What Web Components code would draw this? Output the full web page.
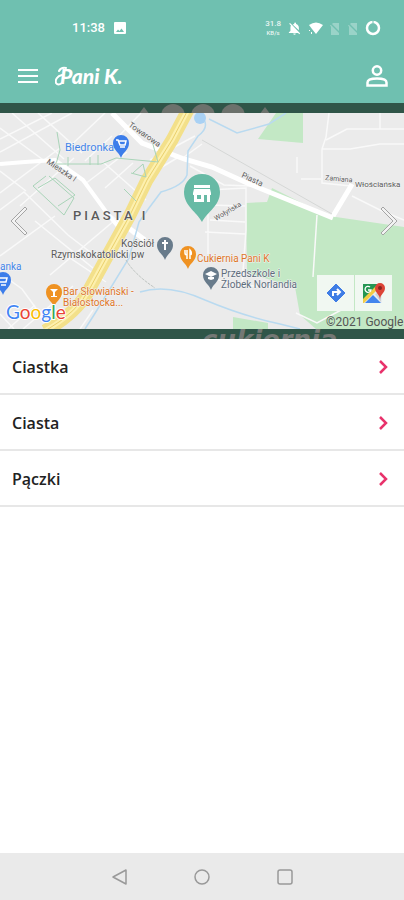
<!DOCTYPE html>
<html lang="pl">
<head>
<meta charset="utf-8">
<meta name="viewport" content="width=device-width, initial-scale=1">
<title>Pani K.</title>
<style>
html,body{margin:0;height:100%}
body{background:#fff;font-family:"Open Sans","Noto Sans",sans-serif;color:#222}
</style>
</head>
<body>
<shop-app></shop-app>

<template id="status-bar">
<style>
:host{display:flex;align-items:center;height:24px;padding:0 23px 0 72px;color:#fff;font:500 13px/24px Roboto,sans-serif}
.left,.right{display:flex;align-items:center;gap:9px}
.right{margin-left:auto;gap:6px}
.rate{display:flex;flex-direction:column;align-items:center;font:500 8px/10px Roboto,sans-serif;opacity:.85}
.rate small{font-size:6px;line-height:8px}
svg{display:block;fill:currentColor}
.dim{opacity:.3}
</style>
<div class="left"><span>11:38</span>
<svg width="12" height="12" viewBox="0 0 12 12"><path fill-rule="evenodd" d="M1 0h10q1 0 1 1v10q0 1-1 1H1q-1 0-1-1V1q0-1 1-1zM2 10h8L7.500 6.500 5.500 9 4 7.500z"/></svg></div>
<div class="right">
<span class="rate"><span>31.8</span><small>KB/s</small></span>
<svg width="15" height="15" viewBox="0 0 24 24"><path d="M20 18.700 7.800 6.100 4.800 3 3.500 4.300l2.800 2.800A7 7 0 0 0 5.500 11v5L3 18v1h14.700l2 2 1.300-1.300zM12 22a2 2 0 0 0 2-2h-4a2 2 0 0 0 2 2zm7-7.300V11c0-3.100-1.600-5.600-4.500-6.300V4a1.500 1.500 0 0 0-3 0v.7q-1.400.3-2.500 1z"/></svg>
<svg width="15" height="15" viewBox="0 0 15 15"><path d="M1 4q7-5 14 0L8 13 4 8zM1 9h1v1H1zm2 2h1v2H3z"/></svg>
<svg class="dim" width="12" height="13" viewBox="0 0 12 13"><path d="M1 3h1l8 8v2H2V5zM4 1h6v8L3 2z"/></svg>
<svg class="dim" width="12" height="13" viewBox="0 0 12 13"><path d="M1 3h1l8 8v2H2V5zM4 1h6v8L3 2z"/></svg>
<svg width="16" height="16" viewBox="0 0 16 16"><circle cx="8" cy="8" r="6" fill="none" stroke="currentColor" stroke-width="2.500"/><path d="M7.500 0h1v4h-1z" fill="#6fc0b0"/></svg>
</div>
</template>

<template id="app-header">
<style>
:host{display:block;background:#6fc0b0;padding-top:16px;color:#fff}
nav{display:flex;align-items:center;height:55px;padding:8px 13px 0 14px}
button{display:grid;place-items:center;width:28px;height:40px;padding:0;border:0;background:none;color:inherit}
a{position:relative;margin-left:18px;color:inherit;text-decoration:none;font:italic 900 21px/28px Lato,sans-serif}
.swash{position:absolute;left:-5px;top:3px;fill:none;stroke:currentColor;stroke-width:2;stroke-linecap:round}
.user{margin-left:auto}
svg{display:block;fill:currentColor}
.user svg{fill:none;stroke:currentColor;stroke-width:2.500}
</style>
<status-bar></status-bar>
<nav>
<button aria-label="Menu"><svg width="20" height="14" viewBox="0 0 20 14"><path d="M0 0h20v2H0zM0 6h20v2H0zM0 12h20v2H0z"/></svg></button>
<a href="#">Pani K.<svg class="swash" width="16" height="22" viewBox="0 0 16 22" aria-hidden="true"><path d="M7 10C2 11 0 15 1 18q2 3 6 0M4 6q2-4 7-3"/></svg></a>
<button class="user" aria-label="Konto"><svg width="22" height="22" viewBox="0 0 22 22"><circle cx="11" cy="5.500" r="4.200"/><path d="M1.500 20.500v-3q0-4 9.500-4t9.500 4v3z"/></svg></button>
</nav>
</template>

<template id="shop-map">
<style>
:host{display:block;position:relative;background:#2f5548;padding:10px 0;overflow:hidden}
.back{position:absolute;inset:0;width:100%;height:100%}
.map{display:block;position:relative;width:100%;height:216px;background:#ebebeb}
.arrow{position:absolute;top:50%;transform:translateY(-50%);width:20px;height:36px;padding:0;border:0;background:none}
.prev{left:9px}.next{right:5px}
.arrow svg{display:block;fill:#f2f2f2;stroke:#a4a4a4;stroke-width:1}
.tools{position:absolute;right:12px;bottom:28px;display:flex;gap:1px}
.tools a{display:grid;place-items:center;width:37px;height:36px;background:#f1f8f2}
.road{fill:none;stroke:#fff}
.minor{stroke:#f9f9f9}
text{font-family:Roboto,sans-serif}
.back text{font-family:"DejaVu Sans",sans-serif}
.google{font-family:Lato,sans-serif}
</style>
<svg class="back" viewBox="0 0 404 236" preserveAspectRatio="xMidYMid slice" aria-hidden="true">
<g fill="#6c716c"><circle cx="173" cy="13" r="12"/><circle cx="203" cy="13" r="12"/><circle cx="233" cy="13" r="12"/><path d="M138 12l6-8 6 8zM259 12l6-8 6 8z"/></g>
<text x="202" y="246" font-size="26" font-weight="700" font-style="italic" fill="#747875">cukiernia</text>
</svg>
<svg class="map" viewBox="0 113 404 216" preserveAspectRatio="xMidYMid slice" role="img" aria-label="Mapa okolicy cukierni">
<rect y="113" width="404" height="216" fill="#ebebeb"/>
<g fill="#c3e8c5"><path d="M276 113h27v30l-45-4 18-26zM272 188l56 28 8 1 68 10v102h-88l-16-14-5-28-48-14-1-70 21-1zM233 317l35 6v6h-35z"/></g>
<g class="road minor" stroke-width="1.500">
<path d="M0 139l52-26M0 152l72-39M12 113l52 46M38 113l44 40M0 128l46 34M0 193l60-45M20 206l54-48M0 171l26 20M66 150l39-37M85 161l27-25M105 188l28-25M103 162l43 38M85 184l42-32M0 210l24-18 44 43 26 20M0 256l55-40M35 221l58 47M50 275l65-55M0 273l22 16 29 40M23 329l50-43M8 329l27-24M61 252l45 30M105 210l29 25M141 113l-23 24M150 160l45-24M157 170l20-12"/>
<path d="M202 144l-18 13M190 166l34 19 26 1M208 190l38-2v42l-4 55M208 205l37 1M210 220l35 2M205 232l40 2M208 192v62M204 275l30 10 42 2M329 113l-3 24-4 12v34l29 3M322 149h28l30-5h24M326 140l21-11h57M380 113v16M297 157v16M301 179h20M352 196l28 14 24 10M317 215l-4 62M296 313l21 10 26-14M0 314l14 15M80 329l13-19"/>
</g>
<g class="road"><path d="M0 164l25-2 30-2 28 20 24 33 18 22" stroke-width="4"/><path d="M112 113l30 30 42 16 28 8 35 16 86 35" stroke-width="5"/><path d="M333 216l18-30 1-2" stroke-width="5"/><path d="M118 220l27 20" stroke-width="5"/></g>
<g fill="none">
<path d="M190 106L172 140 147 180 130 215 109 253 90 288Q78 312 45 331" stroke="#f3e08a" stroke-width="13"/>
<path d="M190 106L172 140 147 180 130 215 109 253 90 288Q78 312 45 331" stroke="#fdf0ae" stroke-width="5"/>
<path d="M190 106L172 140 147 180 130 215 109 253 90 288Q78 312 45 331" stroke="#e9cf6c" stroke-width="1"/>
</g>
<g fill="none" stroke="#b9daf0" stroke-width="1.500"><path d="M198 113q15 12 0 23l-10 15-1 24q-4 11-26 17l-12 16-10 14-10 36-35 57-9 14M209 119l28 14 32-9 17-11M140 292q28-9 65 8 38 16 75 24l20 5"/></g>
<circle cx="200" cy="118" r="6" fill="#a9d1f4"/>
<g fill="none" stroke="#a9d4b8" stroke-width="1"><path d="M57 132l3 18-4 14h45l15-6 42 4-6-21M46 176l-13 10 31 29 10-17-25-22M38 188l17-10 20 17-17 11M68 157v9M90 157v8M98 155v10M133 173l10-9 3 13-15-4M124 189l12 12"/></g>
<path d="M202 140l130 74" fill="none" stroke="#d5d7d6" stroke-width="1"/>
<path d="M126 260q8 14 29 28" fill="none" stroke="#bcc2bf" stroke-width="1" stroke-dasharray="3 1"/>
<g font-size="10" fill="#5a5a5a" stroke="#f4f4f4" stroke-width="1" paint-order="stroke" stroke-linejoin="round">
<text transform="translate(128 126) rotate(35)" font-size="8">Towarowa</text>
<text transform="translate(46 163) rotate(34)" font-size="8">Mieszka I</text>
<text transform="translate(241 177) rotate(25)" font-size="8">Piasta</text>
<text transform="translate(216 221) rotate(-31)" font-size="7">Wołyńska</text>
<text transform="translate(325 180) rotate(5)" font-size="7">Zamiana</text>
<text x="355" y="187" font-size="8">Włościańska</text>
<text x="73" y="220" font-size="13" font-weight="500" letter-spacing="3">PIASTA I</text>
<text x="121" y="247">Kościół</text><text x="51" y="258">Rzymskokatolicki pw</text>
<g fill="#5e6d7c"><text x="221" y="277">Przedszkole i</text><text x="221" y="288">Żłobek Norlandia</text></g>
<g fill="#4384e8"><text x="65" y="151" font-size="11">Biedronka</text><text x="0" y="270">anka</text></g>
<g fill="#df7628"><text x="197" y="262">Cukiernia Pani K</text><text x="63" y="295">Bar Słowiański -</text><text x="63" y="306">Białostocka...</text></g>
</g>
<defs><path id="pin" d="M0 11C-2 5-8 3-8-4a8 8 0 0 1 16 0C8 3 2 5 0 11z"/></defs>
<use href="#pin" x="121" y="147" fill="#3c7dea"/><path d="M116 140h2l2 5h5l1-4h-7M120 147h5" fill="none" stroke="#fff" stroke-width="1.500"/>
<use href="#pin" x="3" y="284" fill="#3c7dea"/><path d="M-1 278h8l-1 4h-6M1 285h5" fill="none" stroke="#fff" stroke-width="1.500"/>
<use href="#pin" x="165" y="249" fill="#687b8b"/><path d="M165 240v10M162 243h6" stroke="#fff" stroke-width="2"/>
<use href="#pin" x="188" y="258" fill="#ef9222"/><path d="M185 250v3q0 2 2 2v4M187 250v5M190 259v-9q2 2 1 5" fill="none" stroke="#fff" stroke-width="1.500"/>
<use href="#pin" x="211" y="279" fill="#687b8b"/><path d="M205 274l6-3 6 3-6 3zM208 277v2l3 1 3-1v-2" fill="#fff"/>
<use href="#pin" x="54" y="296" fill="#ef9222"/><path d="M50 289h8l-4 4zM53 292h2v4h-2zM51 296h6v1h-6z" fill="#fff"/>
<path d="M202 222C197 212 184 206 184 192a18 18 0 0 1 36 0C220 206 207 212 202 222z" fill="#67baa5"/>
<path fill="#fff" fill-rule="evenodd" d="M194 185h16v3h-16zM194 189h16l1 4v2h-1v7h-3v-7h-3v7h-10v-7h-1v-2zM197 195v4h4v-4z"/>
<text class="google" x="6" y="319" font-size="19" stroke="#fff" stroke-width="2" paint-order="stroke"><tspan fill="#4285f4">G</tspan><tspan fill="#ea4335">o</tspan><tspan fill="#fbbc05">o</tspan><tspan fill="#4285f4">g</tspan><tspan fill="#34a853">l</tspan><tspan fill="#ea4335">e</tspan></text>
<text x="326" y="326" font-size="12" fill="#555">©2021 Google</text>
</svg>
<button class="arrow prev" aria-label="Poprzedni"><svg width="20" height="36" viewBox="0 0 20 36"><path d="M16 4L2 18l14 14 2-2L6 18 18 6z"/></svg></button>
<button class="arrow next" aria-label="Następny"><svg width="20" height="36" viewBox="0 0 20 36"><path d="M4 4l14 14L4 32l-2-2 12-12L2 6z"/></svg></button>
<div class="tools">
<a href="#trasa" aria-label="Wyznacz trasę"><svg width="20" height="20" viewBox="0 0 20 20"><path d="M10 1l9 9-9 9-9-9z" fill="#3f7de5" stroke="#3f7de5" stroke-linejoin="round"/><path d="M7 13v-4h6M11 6l3 3-3 3" fill="none" stroke="#fff" stroke-width="2"/></svg></a>
<a href="#mapa" aria-label="Otwórz w Mapach Google"><svg width="22" height="22" viewBox="0 0 22 22"><path d="M0 2h18v19H0z" fill="#259653"/><path d="M0 21L15 5l4 4v12z" fill="#e9edf0"/><path d="M2 21l8-8 8 8z" fill="#4385ed"/><path d="M0 17L14 3l2 3L1 21H0z" fill="#f3cc45"/><path d="M18 9v11l-6-8z" fill="#cfd3d5"/><path d="M7 5a3 3 0 1 0 1 3H5" fill="none" stroke="#fff" stroke-width="1.300"/><path d="M17 18c0-6-5-7-5-12a5 5 0 0 1 10 0c0 5-5 6-5 12z" fill="#dc4437"/><circle cx="17" cy="6" r="2" fill="#87251f"/></svg></a>
</div>
</template>

<template id="category-row">
<style>
:host{display:block;border-bottom:2px solid #e7e7e7}
a{display:flex;align-items:center;justify-content:space-between;padding:16px 15px 14px 12px;color:#222;text-decoration:none;font:600 16px/24px "Open Sans","Noto Sans",sans-serif}
svg{display:block;fill:none;stroke:#e8326b;stroke-width:2.500}
</style>
<a href="#"><span><slot></slot></span><svg width="12" height="16" viewBox="0 0 12 16" aria-hidden="true"><path d="M3 2l6 6-6 6"/></svg></a>
</template>

<template id="system-nav">
<style>
:host{display:flex;justify-content:center;align-items:center;gap:55px;height:47px;background:#eaeaea}
button{display:grid;place-items:center;width:28px;height:28px;padding:0;border:0;background:none}
svg{display:block;fill:none;stroke:#999;stroke-width:1.500;stroke-linejoin:round}
</style>
<button aria-label="Wstecz"><svg width="18" height="18" viewBox="0 0 18 18"><path d="M3 9l13-7v14z"/></svg></button>
<button aria-label="Ekran główny"><svg width="18" height="18" viewBox="0 0 18 18"><circle cx="9" cy="9" r="7"/></svg></button>
<button aria-label="Ostatnie"><svg width="18" height="18" viewBox="0 0 18 18"><rect x="2" y="2" width="14" height="14" rx="2"/></svg></button>
</template>

<template id="shop-app">
<style>
:host{display:flex;flex-direction:column;min-height:100vh}
main{flex:1}
</style>
<app-header></app-header>
<main>
<shop-map></shop-map>
<category-row>Ciastka</category-row>
<category-row>Ciasta</category-row>
<category-row>Pączki</category-row>
</main>
<system-nav></system-nav>
</template>

<script>
for (const name of ["status-bar","app-header","shop-map","category-row","system-nav","shop-app"]) {
  customElements.define(name, class extends HTMLElement {
    constructor() {
      super();
      this.attachShadow({mode:"open"}).append(document.getElementById(name).content.cloneNode(true));
    }
  });
}
</script>
</body>
</html>
